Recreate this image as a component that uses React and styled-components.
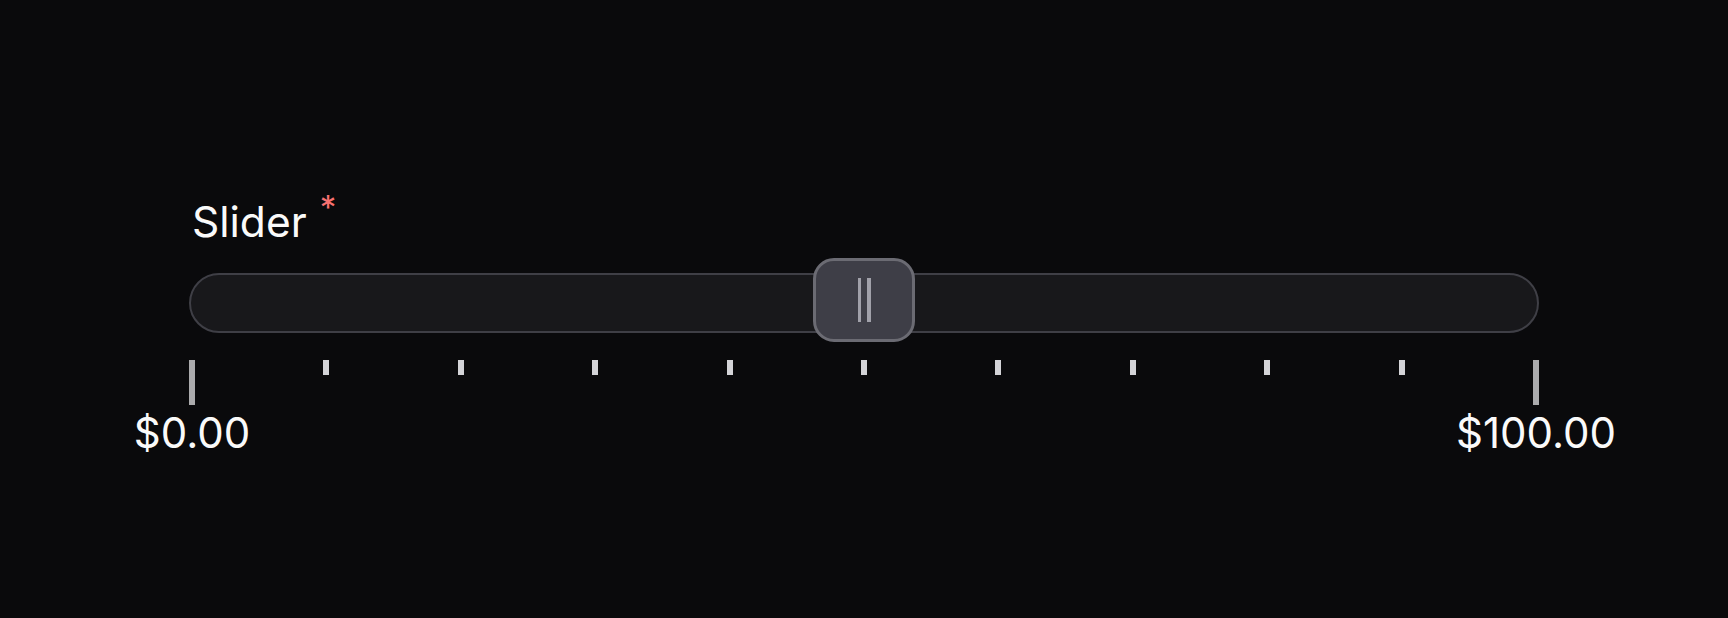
import styled, { createGlobalStyle } from 'styled-components';

const GlobalStyle = createGlobalStyle`
    html, body {
        margin: 0;
        padding: 0;
        background: #0a0a0c;
        font-family: Inter, "Noto Sans", sans-serif;
    }
`;

const Page = styled.div`
    min-height: 618px;
    padding: 201px 0 0 189px;
    box-sizing: border-box;
`;

const Field = styled.div`
    display: flex;
    flex-direction: column;
    width: 1350px;
`;

const Label = styled.div`
    display: flex;
    align-items: flex-start;
    padding-left: 3px;
    color: #fafafa;
    font-size: 42.5px;
    line-height: 1;
    font-weight: 400;
`;

const Required = styled.span`
    color: #f87171;
    font-size: 33px;
    line-height: 1;
    margin-left: 13px;
    margin-top: -10px;
`;

const Track = styled.div`
    position: relative;
    margin-top: 29px;
    height: 60px;
    box-sizing: border-box;
    background: #18181b;
    border: 2.5px solid #3f3f46;
    border-radius: 30px;
`;

const Thumb = styled.div`
    position: absolute;
    top: -17px;
    width: 102px;
    height: 84px;
    box-sizing: border-box;
    transform: translateX(-50%);
    display: flex;
    align-items: center;
    justify-content: center;
    gap: 6px;
    background: #3e3e47;
    border: 3px solid #6b6b73;
    border-radius: 21px;
`;

const Grip = styled.span`
    width: 3.5px;
    height: 44px;
    background: #a1a1aa;
`;

const Ticks = styled.div`
    display: flex;
    justify-content: space-between;
    align-items: flex-start;
    margin-top: 27px;
`;

const Tick = styled.span`
    width: 6px;
    height: ${(p) => (p.$major ? '45px' : '15px')};
    background: ${(p) => (p.$major ? '#ababad' : '#d4d4d8')};
`;

const Values = styled.div`
    display: flex;
    justify-content: space-between;
    margin-top: 7px;
`;

const ValueAnchor = styled.div`
    width: 6px;
    display: flex;
    justify-content: center;
`;

const Value = styled.span`
    color: #fafafa;
    font-size: 42px;
    line-height: 1;
    white-space: nowrap;
`;

const value = 50;
const ticks = Array.from({ length: 11 }, (_, i) => i);

export default function App() {
    return (
        <>
            <GlobalStyle />
            <Page>
                <Field>
                    <Label>
                        Slider
                        <Required>*</Required>
                    </Label>
                    <Track>
                        <Thumb style={{ left: `${value}%` }}>
                            <Grip />
                            <Grip />
                        </Thumb>
                    </Track>
                    <Ticks>
                        {ticks.map((t) => (
                            <Tick key={t} $major={t === 0 || t === 10} />
                        ))}
                    </Ticks>
                    <Values>
                        <ValueAnchor>
                            <Value>$0.00</Value>
                        </ValueAnchor>
                        <ValueAnchor>
                            <Value>$100.00</Value>
                        </ValueAnchor>
                    </Values>
                </Field>
            </Page>
        </>
    );
}
